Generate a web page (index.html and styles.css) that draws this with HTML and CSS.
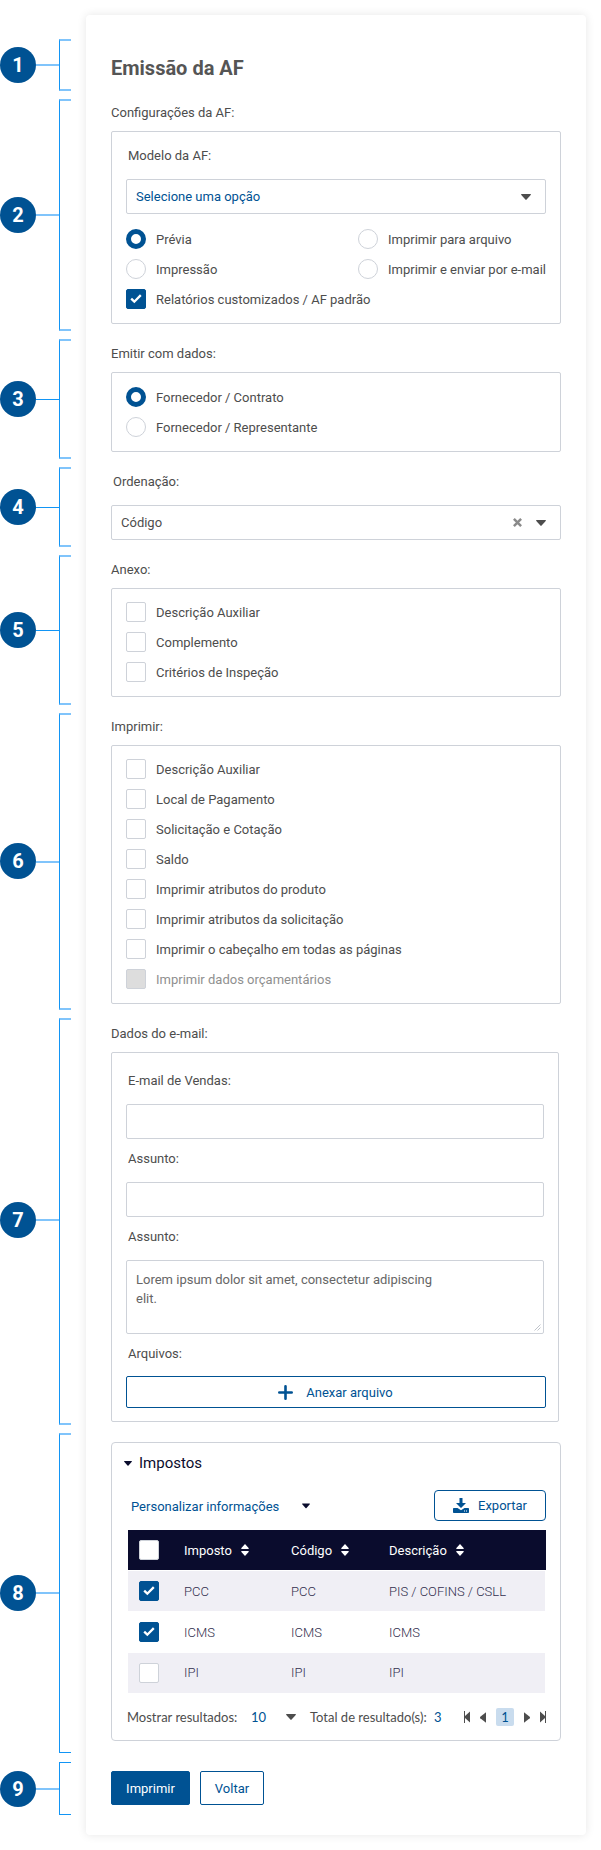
FILE: index.html
```html
<!DOCTYPE html>
<html lang="pt-BR">
<head>
<meta charset="utf-8">
<title>Emissão da AF</title>
<link rel="stylesheet" href="styles.css">
</head>
<body>
<svg class="defs" width="0" height="0" aria-hidden="true">
  <symbol id="caret" viewBox="0 0 10 6"><path d="M.6 0h8.8q.9.2.3.9L5.6 5.6q-.6.6-1.2 0L.3.9Q-.3.2.6 0z"/></symbol>
  <symbol id="check" viewBox="0 0 12 10"><path d="M1.2 4.700l3.100 3 6.500-6.600" fill="none" stroke="currentColor" stroke-width="2.3"/></symbol>
  <symbol id="sort" viewBox="0 0 8 12"><path d="M4 0l3.6 3.9q.6.9-.4 1.100H.8Q-.2 4.800.4 3.900zM4 12l3.600-3.900q.6-.9-.4-1.100H.8q-1 .2-.4 1.100z"/></symbol>
  <symbol id="prev" viewBox="0 0 6 11"><path d="M6 .2v10.600L.3 6.200q-.6-.7 0-1.400z"/></symbol>
  <symbol id="first" viewBox="0 0 6 12"><path d="M0 0h1v5L6 .6v10.800L1 7v5H0z"/></symbol>
</svg>
<div class="page">
  <aside class="marks">
    <div class="mark m1"><span class="num">1</span><span class="link"></span><span class="bracket"></span></div>
    <div class="mark m2"><span class="num">2</span><span class="link"></span><span class="bracket"></span></div>
    <div class="mark m3"><span class="num">3</span><span class="link"></span><span class="bracket"></span></div>
    <div class="mark m4"><span class="num">4</span><span class="link"></span><span class="bracket"></span></div>
    <div class="mark m5"><span class="num">5</span><span class="link"></span><span class="bracket"></span></div>
    <div class="mark m6"><span class="num">6</span><span class="link"></span><span class="bracket"></span></div>
    <div class="mark m7"><span class="num">7</span><span class="link"></span><span class="bracket"></span></div>
    <div class="mark m8"><span class="num">8</span><span class="link"></span><span class="bracket thin-end"></span></div>
    <div class="mark m9"><span class="num">9</span><span class="link"></span><span class="bracket thin"></span></div>
  </aside>
  <main class="panel">
    <h1 class="title">Emissão da AF</h1>

    <section class="section">
      <div class="label">Configurações da AF:</div>
      <div class="box tall">
        <div class="label inner">Modelo da AF:</div>
        <div class="select primary"><span>Selecione uma opção</span><svg class="caret"><use href="#caret"/></svg></div>
        <div class="options">
          <div class="pair">
            <div class="opt"><i class="radio on"></i>Prévia</div>
            <div class="opt"><i class="radio"></i>Imprimir para arquivo</div>
          </div>
          <div class="pair">
            <div class="opt"><i class="radio"></i>Impressão</div>
            <div class="opt"><i class="radio"></i>Imprimir e enviar por e-mail</div>
          </div>
          <div class="opt"><i class="cb on"><svg><use href="#check"/></svg></i>Relatórios customizados / AF padrão</div>
        </div>
      </div>
    </section>

    <section class="section">
      <div class="label">Emitir com dados:</div>
      <div class="box tall options">
        <div class="opt"><i class="radio on"></i>Fornecedor / Contrato</div>
        <div class="opt"><i class="radio"></i>Fornecedor / Representante</div>
      </div>
    </section>

    <section class="section">
      <div class="label shifted">Ordenação:</div>
      <div class="select"><span>Código</span><svg class="clear" viewBox="0 0 8 8"><path d="M.8.800l6.400 6.400M7.200.800L.8 7.200"/></svg><svg class="caret"><use href="#caret"/></svg></div>
    </section>

    <section class="section">
      <div class="label">Anexo:</div>
      <div class="box options">
        <div class="opt"><i class="cb"></i>Descrição Auxiliar</div>
        <div class="opt"><i class="cb"></i>Complemento</div>
        <div class="opt"><i class="cb"></i>Critérios de Inspeção</div>
      </div>
    </section>

    <section class="section">
      <div class="label">Imprimir:</div>
      <div class="box options">
        <div class="opt"><i class="cb"></i>Descrição Auxiliar</div>
        <div class="opt"><i class="cb"></i>Local de Pagamento</div>
        <div class="opt"><i class="cb"></i>Solicitação e Cotação</div>
        <div class="opt"><i class="cb"></i>Saldo</div>
        <div class="opt"><i class="cb"></i>Imprimir atributos do produto</div>
        <div class="opt"><i class="cb"></i>Imprimir atributos da solicitação</div>
        <div class="opt"><i class="cb"></i>Imprimir o cabeçalho em todas as páginas</div>
        <div class="opt disabled"><i class="cb"></i>Imprimir dados orçamentários</div>
      </div>
    </section>

    <section class="section">
      <div class="label">Dados do e-mail:</div>
      <div class="box email">
        <div class="label inner">E-mail de Vendas:</div>
        <div class="input"></div>
        <div class="label inner">Assunto:</div>
        <div class="input"></div>
        <div class="label inner">Assunto:</div>
        <div class="input area"><p class="lorem">Lorem ipsum dolor sit amet, consectetur adipiscing elit.</p><svg class="grip" viewBox="0 0 7 7"><path d="M.5 6.500l6-6M3.500 6.500l3-3"/></svg></div>
        <div class="label inner">Arquivos:</div>
        <div class="attach"><svg class="plus" viewBox="0 0 15 15"><path d="M7.500 1.300v12.400M1.300 7.500h12.400"/></svg><span>Anexar arquivo</span></div>
      </div>
    </section>

    <section class="section taxes">
      <div class="tax-title"><svg class="caret"><use href="#caret"/></svg><span>Impostos</span></div>
      <div class="tools">
        <span class="custom">Personalizar informações</span><svg class="caret"><use href="#caret"/></svg>
        <div class="export"><svg class="dl" viewBox="0 0 16 15"><path d="M6.500 0h3v5H13L8 10 3 5h3.500zM.8 10h3.700L8 12.300 11.500 10h3.700q.8 0 .8.800v3.400q0 .8-.8.800H.8q-.8 0-.8-.8v-3.400q0-.8.800-.8z"/><path d="M11 13h1M13 13h1" stroke="#fff" stroke-width="1"/></svg><span>Exportar</span></div>
      </div>
      <div class="table">
        <div class="row head"><i class="cb"></i><span>Imposto<svg class="sort"><use href="#sort"/></svg></span><span>Código<svg class="sort"><use href="#sort"/></svg></span><span>Descrição<svg class="sort"><use href="#sort"/></svg></span></div>
        <div class="row odd"><i class="cb on"><svg><use href="#check"/></svg></i><span>PCC</span><span>PCC</span><span>PIS / COFINS / CSLL</span></div>
        <div class="row"><i class="cb on"><svg><use href="#check"/></svg></i><span>ICMS</span><span>ICMS</span><span>ICMS</span></div>
        <div class="row odd last"><i class="cb"></i><span>IPI</span><span>IPI</span><span>IPI</span></div>
      </div>
      <div class="pager">
        <span class="show">Mostrar resultados:</span><b class="size">10</b><svg class="caret"><use href="#caret"/></svg>
        <span class="total">Total de resultado(s):</span><b class="count">3</b>
        <div class="nav">
          <svg class="first"><use href="#first"/></svg><svg class="prev"><use href="#prev"/></svg><b class="current">1</b><svg class="prev flip"><use href="#prev"/></svg><svg class="first flip"><use href="#first"/></svg>
        </div>
      </div>
    </section>

    <div class="actions"><div class="btn solid">Imprimir</div><div class="btn">Voltar</div></div>
  </main>
</div>
</body>
</html>
```
FILE: styles.css
```css
* { box-sizing: border-box; }
body {
  margin: 0;
  background: #fff;
  font: 13px/20px Roboto, sans-serif;
  color: #4d4d4d;
}
.defs { position: absolute; }
svg { display: block; flex: none; fill: currentColor; }
.page { display: flex; height: 1850px; overflow: hidden; }

/* numbered callouts */
.marks { width: 86px; flex: none; padding-top: 39px; display: flex; flex-direction: column; gap: 8px; }
.mark { display: flex; align-items: center; flex: none; }
.num {
  width: 36px; height: 36px; border-radius: 50%;
  background: #005293; color: #fff;
  font-size: 20px; font-weight: 700; line-height: 37px; text-align: center;
}
.link { width: 23px; height: 2px; background: #80c4fb; }
.m3 .link, .m4 .link, .m5 .link { height: 1px; background: #1295f5; }
.bracket {
  width: 12px; align-self: stretch;
  border: 2px solid #80c4fb; border-left: 1px solid #1295f5; border-right: 0;
}
.bracket.thin-end { border-bottom: 1px solid #1295f5; }
.bracket.thin { border-top: 1px solid #1295f5; border-bottom: 1px solid #1295f5; }
.m1 { height: 52px; }
.m2 { height: 232px; }
.m3 { height: 120px; }
.m4 { height: 80px; }
.m5 { height: 150px; }
.m6 { height: 297px; }
.m7 { height: 407px; }
.m8 { height: 320px; }
.m9 { height: 53px; margin-top: 1px; }
.m2 .num, .m3 .num, .m6 .num, .m8 .num { margin-bottom: 1px; }
.m7 .num, .m7 .link { margin-bottom: 4px; }

.panel {
  width: 500px; height: 1820px; margin-top: 15px; padding: 43px 25px 0;
  border-radius: 4px; background: #fff; box-shadow: 0 0 10px rgba(0, 0, 0, 0.1);
}
.title { margin: 0 0 25px; font-size: 20px; line-height: 20px; font-weight: 700; color: #555; }
.section { margin-bottom: 20px; }
.label { height: 20px; margin-bottom: 8px; }
.label.shifted { padding-left: 2px; margin-bottom: 13px; }
.label.inner { padding-left: 2px; margin-bottom: 13px; }
.box { border: 1px solid #ced2d9; border-radius: 2px; padding: 13px 14px 14px; }
.box.tall { padding-top: 14px; }
.select {
  height: 35px; border: 1px solid #ced2d9; border-radius: 2px; padding: 0 14px 0 9px;
  display: flex; align-items: center;
}
.select span { flex: 1; }
.select.primary { color: #005293; }
.caret { width: 10px; height: 6px; color: #4d4d4d; }
.clear { width: 9px; height: 9px; margin-right: 14px; stroke: #8a8a8a; stroke-width: 2.2; }
.select.primary { margin-bottom: 15px; }

.options { display: flex; flex-direction: column; gap: 10px; }
.opt { display: flex; align-items: center; gap: 10px; height: 20px; padding-top: 2px; white-space: nowrap; }
.opt > i { margin-top: -2px; }
.pair { display: grid; grid-template-columns: 232px 1fr; }
.radio, .cb { width: 20px; height: 20px; flex: none; border: 1px solid #ced2d9; background: #fff; }
.radio { border-radius: 50%; }
.radio.on { border: 5px solid #005293; }
.cb { border-radius: 2px; display: flex; align-items: center; justify-content: center; color: #fff; }
.cb.on { background: #005293; border-color: #005293; }
.cb svg { width: 12px; height: 10px; }
.disabled { color: #8f8f8f; }
.disabled .cb { background: #ddd; }

.email { width: 448px; padding: 18px 14px 13px; }
.input { height: 35px; border: 1px solid #ced2d9; border-radius: 2px; margin-bottom: 10px; }
.area { height: 74px; padding: 9px 4px 0 9px; color: #666; display: flex; justify-content: space-between; }
.lorem { margin: 0; width: 310px; line-height: 19px; }
.grip { width: 7px; height: 7px; align-self: flex-end; margin: 0 -2px 2px 0; stroke: #c0c4cb; stroke-width: 1; }
.attach {
  width: 420px; height: 32px; margin-top: -1px; border: 1px solid #005293; border-radius: 2px; color: #005293;
  display: flex; align-items: center; justify-content: center; gap: 13px; padding-right: 1px;
}
.attach span { padding-top: 2px; }
.plus { width: 15px; height: 15px; stroke: #005293; stroke-width: 2.6; stroke-linecap: round; }

.taxes { height: 299px; border: 1px solid #ced2d9; border-radius: 4px; padding: 10px 14px 0 12px; margin-bottom: 30px; }
.tax-title { display: flex; align-items: center; gap: 7px; font-size: 15px; color: #0a0c2d; }
.tax-title .caret { width: 8px; height: 5px; color: #0a0c2d; }
.tools { display: flex; align-items: center; height: 31px; margin-top: 17px; padding-left: 7px; color: #005293; }
.tools .caret { margin-left: 23px; width: 8px; height: 6px; color: #0a0c2d; }
.custom { padding-top: 2px; width: 148px; white-space: nowrap; }
.export {
  width: 112px; height: 31px; margin-left: auto; border: 1px solid #005293; border-radius: 4px;
  display: flex; align-items: center; gap: 9px; padding-left: 18px;
}
.dl { width: 16px; height: 15px; }
.table { margin: 9px 0 0 4px; display: flex; flex-direction: column; gap: 1px; }
.row {
  width: 417px; height: 40px; padding-left: 11px; color: #33304f; font-weight: 300;
  display: grid; grid-template-columns: 45px 107px 98px 1fr; align-items: center;
}
.row.head { width: 418px; background: #0a0c2d; color: #fff; font-weight: 400; }
.row.odd { background: #f0eff5; }
.row span { display: flex; align-items: center; padding-top: 2px; }
.row.last span { padding-top: 0; }
.sort { width: 8px; height: 12px; margin: -2px 0 0 9px; }

.pager { display: flex; align-items: center; height: 20px; margin-top: 14px; padding-left: 3px; font-family: Lato, sans-serif; font-size: 13px; white-space: nowrap; }
.pager b { font-weight: 400; color: #005293; font-size: 13px; }
.show { width: 124px; }
.size { width: 35px; }
.total { width: 124px; margin-left: 14px; }
.count { width: 30px; }
.nav { display: flex; align-items: center; }
.first { width: 6px; height: 12px; margin-right: 10px; }
.prev { width: 6px; height: 11px; }
.flip { transform: scaleX(-1); }
.current { width: 18px; height: 18px; line-height: 18px; margin: 0 10px; background: #c9dcee; border-radius: 2px; text-align: center; }
.first.flip { margin: 0 0 0 10px; }

.actions { display: flex; gap: 10px; }
.btn { width: 64px; height: 34px; line-height: 33px; border: 1px solid #005293; border-radius: 2px; color: #005293; text-align: center; }
.btn.solid { width: 79px; background: #005293; color: #fff; }
```
